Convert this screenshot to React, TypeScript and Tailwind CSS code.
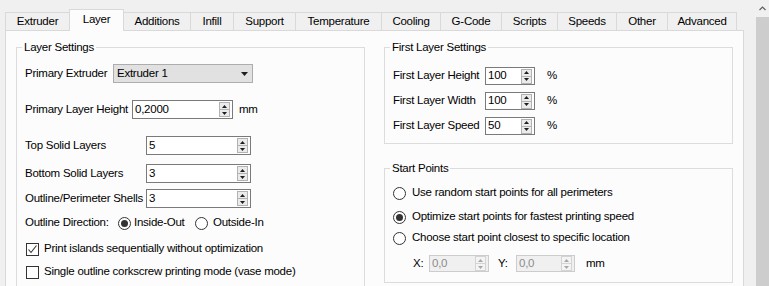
import React from "react";

const tabs = [
  { title: "Extruder", w: "w-[64px] border-l" },
  { title: "Layer", w: "w-[55px] border-l border-r", active: true },
  { title: "Additions", w: "w-[66px]" },
  { title: "Infill", w: "w-[43px] border-l" },
  { title: "Support", w: "w-[62px] border-l" },
  { title: "Temperature", w: "w-[86px] border-l" },
  { title: "Cooling", w: "w-[59px] border-l" },
  { title: "G-Code", w: "w-[61px] border-l" },
  { title: "Scripts", w: "w-[56px] border-l" },
  { title: "Speeds", w: "w-[59px] border-l" },
  { title: "Other", w: "w-[51px] border-l" },
  { title: "Advanced", w: "w-[70px] border-l border-r" },
];

const Arrow = ({ up, disabled }: { up?: boolean; disabled?: boolean }) => (
  <svg width="5" height="3" viewBox="0 0 5 3" className="block">
    <path
      d={up ? "M0 3L2.5 0L5 3Z" : "M0 0L5 0L2.5 3Z"}
      fill={disabled ? "#a8a8a8" : "#1e1e1e"}
    />
  </svg>
);

const SpinButtons = ({ disabled }: { disabled?: boolean }) => (
  <div className="flex flex-col w-[11px] h-[15px] mr-[2px] shrink-0">
    <div
      className={`flex-1 flex items-center justify-center border ${
        disabled ? "border-[#d4d4d4] bg-[#f4f4f4]" : "border-[#b2b2b2] bg-[#ebebeb]"
      }`}
    >
      <Arrow up disabled={disabled} />
    </div>
    <div
      className={`flex-1 flex items-center justify-center border border-t-0 ${
        disabled ? "border-[#d4d4d4] bg-[#f4f4f4]" : "border-[#b2b2b2] bg-[#ebebeb]"
      }`}
    >
      <Arrow disabled={disabled} />
    </div>
  </div>
);

const SpinBox = ({
  value,
  className,
  disabled,
}: {
  value: string;
  className: string;
  disabled?: boolean;
}) => (
  <div
    className={`flex items-center border shrink-0 ${className} ${
      disabled
        ? "border-[#cccccc] bg-[#f0f0f0] text-[#8c8c8c]"
        : "border-[#7a7a7a] bg-white text-black"
    }`}
  >
    <span className="flex-1 pl-[2px] leading-none">{value}</span>
    <SpinButtons disabled={disabled} />
  </div>
);

const Radio = ({ checked }: { checked?: boolean }) => (
  <span className="w-[13px] h-[13px] rounded-full border border-[#333333] bg-white flex items-center justify-center shrink-0">
    {checked && <span className="w-[7px] h-[7px] rounded-full bg-[#333333]" />}
  </span>
);

const Checkbox = ({ checked }: { checked?: boolean }) => (
  <span className="w-[13px] h-[13px] border border-[#333333] bg-white flex items-center justify-center shrink-0">
    {checked && (
      <svg width="11" height="11" viewBox="0 0 11 11">
        <polyline points="1.5,5.5 4,8.5 9.5,1.5" fill="none" stroke="#333333" strokeWidth="1.1" />
      </svg>
    )}
  </span>
);

const App: React.FC = () => {
  return (
    <div className="w-[769px] h-[286px] flex bg-[#f0f0f0] overflow-hidden text-[11.5px] tracking-[-0.25px] text-black whitespace-nowrap font-['Liberation_Sans',Arial,sans-serif]">
      <div className="w-[744px] pl-[5px] flex flex-col shrink-0">
        {/* tabs */}
        <div className="flex items-end pt-[9px]">
          {tabs.map((tab) =>
            tab.active ? (
              <div
                key={tab.title}
                className={`${tab.w} h-[22px] -mb-px relative z-10 border-t border-[#d9d9d9] bg-[#fcfcfc] flex items-center justify-center pb-[1px]`}
              >
                {tab.title}
              </div>
            ) : (
              <div
                key={tab.title}
                className={`${tab.w} h-[18px] border-t border-[#d9d9d9] bg-[#f0f0f0] flex items-center justify-center`}
              >
                {tab.title}
              </div>
            )
          )}
        </div>

        {/* page */}
        <div className="flex-1 border border-[#d9d9d9] bg-[#fcfcfc] flex items-start pl-[10px] gap-[19px]">
          <fieldset className="w-[349px] h-[300px] mt-[8px] border border-[#dcdcdc] pl-[8px] shrink-0">
            <legend className="-ml-[3px] px-[2px] leading-[16px]">Layer Settings</legend>

            <div className="flex items-center h-[19px] mt-[9px]">
              <span className="w-[88px] shrink-0">Primary Extruder</span>
              <div className="w-[140px] h-[19px] border border-[#adadad] bg-[#e1e1e1] flex items-center pl-[3px]">
                <span className="flex-1">Extruder 1</span>
                <svg width="7" height="4" viewBox="0 0 7 4" className="mr-[4px]">
                  <path d="M0 0H7L3.5 4Z" fill="#1e1e1e" />
                </svg>
              </div>
            </div>

            <div className="flex items-center h-[19px] mt-[17px]">
              <span className="w-[107px] shrink-0">Primary Layer Height</span>
              <SpinBox value="0,2000" className="w-[101px] h-[19px]" />
              <span className="ml-[6px]">mm</span>
            </div>

            <div className="flex items-center h-[19px] mt-[17px]">
              <span className="w-[121px] shrink-0">Top Solid Layers</span>
              <SpinBox value="5" className="w-[105px] h-[19px]" />
            </div>

            <div className="flex items-center h-[19px] mt-[9px]">
              <span className="w-[121px] shrink-0">Bottom Solid Layers</span>
              <SpinBox value="3" className="w-[105px] h-[19px]" />
            </div>

            <div className="flex items-center h-[19px] mt-[6px]">
              <span className="w-[121px] shrink-0">Outline/Perimeter Shells</span>
              <SpinBox value="3" className="w-[105px] h-[19px]" />
            </div>

            <div className="flex items-center h-[16px] mt-[7px]">
              <span className="w-[93px] shrink-0">Outline Direction:</span>
              <Radio checked />
              <span className="ml-[3px] w-[61px] shrink-0">Inside-Out</span>
              <Radio />
              <span className="ml-[5px]">Outside-In</span>
            </div>

            <div className="flex items-center h-[16px] mt-[10px] pl-[1px]">
              <Checkbox checked />
              <span className="ml-[5px]">Print islands sequentially without optimization</span>
            </div>

            <div className="flex items-center h-[16px] mt-[7px] pl-[1px]">
              <Checkbox />
              <span className="ml-[5px]">Single outline corkscrew printing mode (vase mode)</span>
            </div>
          </fieldset>

          <div className="flex flex-col shrink-0">
            <fieldset className="w-[349px] mt-[8px] border border-[#dcdcdc] pl-[8px] pb-[8px]">
              <legend className="-ml-[3px] px-[2px] leading-[16px]">First Layer Settings</legend>
              <div className="flex items-center h-[18px] mt-[12px]">
                <span className="w-[92px] shrink-0">First Layer Height</span>
                <SpinBox value="100" className="w-[50px] h-[18px]" />
                <span className="ml-[12px]">%</span>
              </div>
              <div className="flex items-center h-[18px] mt-[7px]">
                <span className="w-[92px] shrink-0">First Layer Width</span>
                <SpinBox value="100" className="w-[50px] h-[18px]" />
                <span className="ml-[12px]">%</span>
              </div>
              <div className="flex items-center h-[18px] mt-[7px]">
                <span className="w-[92px] shrink-0">First Layer Speed</span>
                <SpinBox value="50" className="w-[50px] h-[18px]" />
                <span className="ml-[12px]">%</span>
              </div>
            </fieldset>

            <fieldset className="w-[349px] mt-[16px] border border-[#dcdcdc] pl-[8px] pb-[10px]">
              <legend className="-ml-[3px] px-[2px] leading-[16px]">Start Points</legend>
              <div className="flex items-center h-[16px] mt-[9px]">
                <Radio />
                <span className="ml-[6px]">Use random start points for all perimeters</span>
              </div>
              <div className="flex items-center h-[16px] mt-[8px]">
                <Radio checked />
                <span className="ml-[6px]">Optimize start points for fastest printing speed</span>
              </div>
              <div className="flex items-center h-[16px] mt-[5px]">
                <Radio />
                <span className="ml-[6px]">Choose start point closest to specific location</span>
              </div>
              <div className="flex items-center h-[17px] mt-[9px] pl-[20px]">
                <span className="w-[16px] shrink-0">X:</span>
                <SpinBox value="0,0" disabled className="w-[60px] h-[17px]" />
                <span className="ml-[9px] w-[18px] shrink-0">Y:</span>
                <SpinBox value="0,0" disabled className="w-[59px] h-[17px]" />
                <span className="ml-[11px]">mm</span>
              </div>
            </fieldset>
          </div>
        </div>
      </div>

      {/* scrollbar */}
      <div className="w-[15px] ml-[10px] flex flex-col shrink-0">
        <div className="h-[17px] flex items-center justify-center pl-[2px]">
          <svg width="7" height="5" viewBox="0 0 7 5">
            <polyline points="0.5,4 3.5,1 6.5,4" fill="none" stroke="#606060" strokeWidth="1.2" />
          </svg>
        </div>
        <div className="flex-1 ml-[2px] bg-[#cdcdcd]" />
      </div>
    </div>
  );
};

export default App;
